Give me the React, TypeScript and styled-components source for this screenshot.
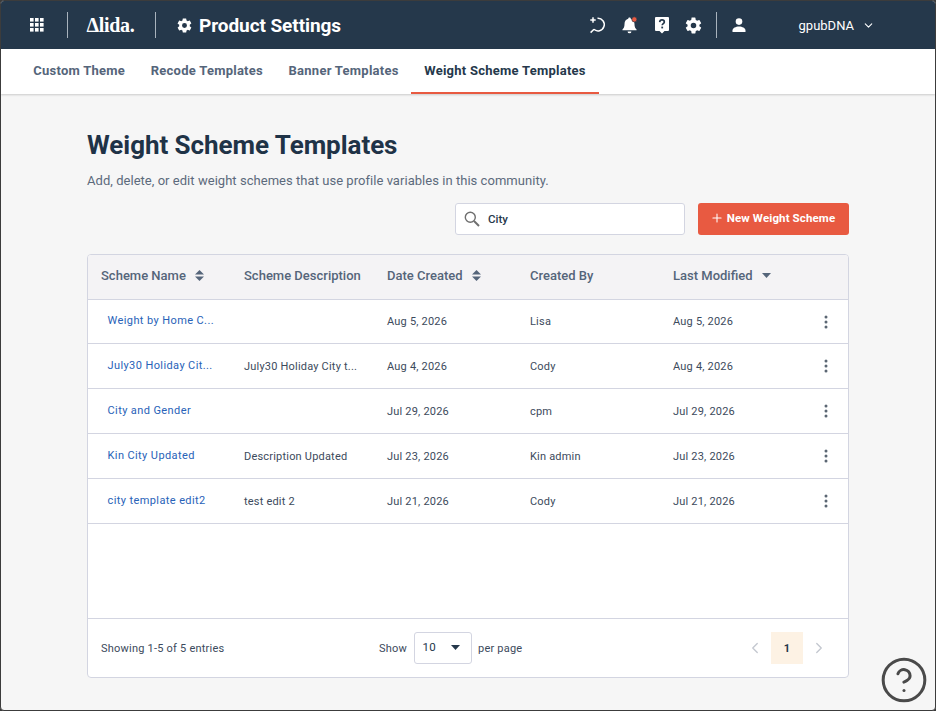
import styled, { createGlobalStyle } from "styled-components";
import { CircleHelp, ChevronDown, ChevronLeft, ChevronRight, Plus } from "lucide-react";

const GlobalStyle = createGlobalStyle`
  html, body {
    margin: 0;
    padding: 0;
    background: #3c3c3c;
  }
  * {
    box-sizing: border-box;
  }
  body {
    font-family: Roboto, "Liberation Sans", sans-serif;
  }
`;

const Frame = styled.div`
  position: relative;
  width: 936px;
  height: 711px;
  border: 1px solid #3c3c3c;
  border-radius: 4px;
  background: #f6f6f6;
  overflow: hidden;
`;

const Header = styled.header`
  height: 48px;
  background: #25384b;
  display: flex;
  align-items: center;
  color: #fff;
`;

const AppsButton = styled.div`
  width: 66px;
  display: flex;
  justify-content: center;
  padding-left: 5px;
`;

const Divider = styled.span`
  width: 1px;
  height: 26px;
  background: #a9b3bd;
`;

const LogoText = styled.div`
  width: 87px;
  display: flex;
  align-items: center;
  justify-content: center;
  font-family: "Liberation Serif", serif;
  font-size: 20px;
  font-weight: 700;
  letter-spacing: -0.3px;
  padding-right: 2px;
`;

const ProductTitle = styled.div`
  display: flex;
  align-items: center;
  gap: 6px;
  margin-left: 20px;
  font-size: 19px;
  font-weight: 700;
  letter-spacing: -0.07px;
`;

const HeaderRight = styled.div`
  margin-left: auto;
  display: flex;
  align-items: center;
`;

const HeaderIcon = styled.div`
  width: 32px;
  display: flex;
  justify-content: center;
`;

const UserIcon = styled(HeaderIcon)`
  margin-left: 6px;
`;

const HeaderDivider = styled(Divider)`
  margin-left: 6px;
`;

const UserName = styled.div`
  display: flex;
  align-items: center;
  gap: 8px;
  margin-left: 44px;
  margin-right: 60px;
  font-size: 13px;
`;

const Tabs = styled.nav`
  height: 45px;
  background: #fff;
  display: flex;
  padding-left: 19.5px;
  box-shadow: 0 1px 2px rgba(0, 0, 0, 0.18);
`;

const Tab = styled.div<{ $active?: boolean }>`
  padding: 0 12.8px;
  height: 45px;
  display: flex;
  align-items: center;
  font-size: 13px;
  font-weight: 700;
  letter-spacing: 0.25px;
  color: ${(p) => (p.$active ? "#25384b" : "#55657a")};
  border-bottom: 2px solid ${(p) => (p.$active ? "#e85a41" : "transparent")};
`;

const Content = styled.main`
  padding: 34px 86px 0;
`;

const Title = styled.h1`
  margin: 0;
  font-size: 26px;
  line-height: 34px;
  font-weight: 700;
  letter-spacing: -0.05px;
  color: #1f3347;
`;

const Subtitle = styled.p`
  margin: 11px 0 0;
  font-size: 13px;
  line-height: 16px;
  letter-spacing: 0.04px;
  color: #5c6a7c;
`;

const Toolbar = styled.div`
  display: flex;
  justify-content: flex-end;
  gap: 13px;
  margin-top: 14px;
`;

const SearchBox = styled.div`
  width: 230px;
  height: 32px;
  background: #fff;
  border: 1px solid #d3d5e1;
  border-radius: 3px;
  display: flex;
  align-items: center;
  gap: 8px;
  padding-left: 8px;
  font-size: 11.5px;
  font-weight: 500;
  color: #25384b;
`;

const NewButton = styled.button`
  width: 151px;
  height: 32px;
  background: #e85a41;
  border: 0;
  border-radius: 3px;
  color: #fff;
  display: flex;
  align-items: center;
  justify-content: center;
  gap: 3px;
  padding: 0 2px 2px 0;
  font-family: inherit;
  font-size: 11.5px;
  font-weight: 700;
  letter-spacing: 0.12px;
`;

const Card = styled.section`
  margin-top: 19px;
  height: 424px;
  background: #fff;
  border: 1px solid #d3d5e1;
  border-radius: 4px;
  display: flex;
  flex-direction: column;
  overflow: hidden;
`;

const HeadRow = styled.div`
  display: grid;
  grid-template-columns: repeat(5, 143px) 1fr;
  height: 45px;
  padding: 0 0 3px 13px;
  align-items: center;
  background: #f4f3f5;
  border-bottom: 1px solid #d3d5e1;
  flex-shrink: 0;
`;

const HeadCell = styled.div`
  display: flex;
  align-items: center;
  gap: 9px;
  font-size: 13px;
  font-weight: 500;
  color: #55657a;
`;

const Row = styled.div`
  display: grid;
  grid-template-columns: repeat(5, 143px) 1fr;
  height: 45px;
  padding-left: 13px;
  align-items: center;
  border-bottom: 1px solid #d3d5e1;
  flex-shrink: 0;

  &:nth-child(2) {
    height: 44px;
  }
`;

const NameLink = styled.a`
  padding-left: 6.5px;
  font-size: 11px;
  letter-spacing: 0.4px;
  color: #2862b8;
  position: relative;
  top: -1px;
`;

const Cell = styled.div`
  font-size: 11px;
  letter-spacing: 0.2px;
  color: #3c4a5c;
`;

const KebabCell = styled.div`
  display: flex;
  justify-content: flex-end;
  padding-right: 20px;
  color: #5b6673;
`;

const Footer = styled.div`
  margin-top: auto;
  height: 59px;
  border-top: 1px solid #d3d5e1;
  display: flex;
  align-items: center;
  padding: 0 13px;
  font-size: 11px;
  letter-spacing: 0.22px;
  color: #3c4a5c;
  flex-shrink: 0;
`;

const Entries = styled.div`
  width: 278px;
`;

const PerPage = styled.div`
  display: flex;
  align-items: center;
  gap: 6.5px;
`;

const PageSelect = styled.div`
  width: 58px;
  height: 32px;
  border: 1px solid #d3d5e1;
  border-radius: 3px;
  display: flex;
  align-items: center;
  justify-content: space-between;
  padding: 0 11px 2px 8px;
  font-size: 11.5px;
  color: #25384b;
`;

const Pager = styled.div`
  margin-left: auto;
  margin-right: 7px;
  display: flex;
  align-items: center;
  gap: 7px;
  color: #c4c8d0;
`;

const PageNumber = styled.div`
  width: 32px;
  height: 32px;
  background: #fdf2e4;
  color: #25384b;
  font-size: 11px;
  font-weight: 700;
  display: flex;
  align-items: center;
  justify-content: center;
`;

const HelpBubble = styled.div`
  position: absolute;
  right: 6px;
  bottom: 5px;
  width: 50px;
  height: 50px;
  color: #4a4a4a;
`;

const AppsIcon = () => (
  <svg width="14" height="14" viewBox="0 0 14 14" fill="#fff">
    {[0, 5, 10].flatMap((y) =>
      [0, 5, 10].map((x) => <rect key={`${x}-${y}`} x={x} y={y} width="3.6" height="3.6" />)
    )}
  </svg>
);

const SolidGear = ({ size }: { size: number }) => (
  <svg width={size} height={size} viewBox="0 0 24 24" fill="#fff">
    <path d="M19.4 13c.04-.33.06-.66.06-1s-.02-.67-.07-1l2.11-1.65c.19-.15.24-.42.12-.64l-2-3.46c-.12-.22-.39-.3-.61-.22l-2.49 1c-.52-.4-1.08-.73-1.69-.98l-.38-2.65A.49.49 0 0 0 14 2h-4c-.25 0-.46.18-.49.42l-.38 2.65c-.61.25-1.17.59-1.69.98l-2.49-1c-.23-.09-.49 0-.61.22l-2 3.46c-.13.22-.07.49.12.64L4.57 11c-.05.33-.08.67-.08 1s.02.67.07 1l-2.11 1.65c-.19.15-.24.42-.12.64l2 3.46c.12.22.39.3.61.22l2.49-1c.52.4 1.08.73 1.69.98l.38 2.65c.03.24.24.42.49.42h4c.25 0 .46-.18.49-.42l.38-2.65c.61-.25 1.17-.59 1.69-.98l2.49 1c.23.09.49 0 .61-.22l2-3.46c.12-.22.07-.49-.12-.64L19.4 13zM12 15.5a3.5 3.5 0 1 1 0-7 3.5 3.5 0 0 1 0 7z" />
  </svg>
);

const SparkSearchIcon = () => (
  <svg width="18" height="18" viewBox="0 0 18 18" fill="none" stroke="#fff" strokeWidth="1.5">
    <path d="M8.500 2.300a6.300 6.300 0 1 1-3.700 11" />
    <path d="M5 13.300 1.600 16.600" />
    <path d="M4 1 4.800 3.200 7 4 4.800 4.800 4 7 3.200 4.800 1 4 3.200 3.200z" fill="#fff" strokeWidth="0.5" />
  </svg>
);

const BellIcon = () => (
  <svg width="19" height="19" viewBox="0 0 18 18" fill="#fff">
    <path d="M9 1.500c.7 0 1.200.5 1.200 1.100 2.200.5 3.500 2.400 3.500 4.800 0 3 .8 4.400 2 5.400v.8H2.300v-.8c1.200-1 2-2.400 2-5.400 0-2.400 1.300-4.300 3.500-4.800C7.800 2 8.300 1.500 9 1.500z" />
    <path d="M7.200 14.600h3.600a1.800 1.800 0 0 1-3.600 0z" />
    <circle cx="13.600" cy="3.200" r="2.400" fill="#e85a41" stroke="#25384b" strokeWidth="0.6" />
  </svg>
);

const HelpFlagIcon = () => (
  <svg width="16" height="18" viewBox="0 0 16 18">
    <path d="M2 1h12a1 1 0 0 1 1 1v12a1 1 0 0 1-1 1h-3.500L8 17.500 5.500 15H2a1 1 0 0 1-1-1V2a1 1 0 0 1 1-1z" fill="#fff" />
    <path d="M5.700 6.100C5.800 4.700 6.700 3.900 8 3.900c1.400 0 2.300.8 2.300 2 0 1.700-2.100 1.700-2.100 3.400" fill="none" stroke="#25384b" strokeWidth="1.700" />
    <rect x="7.300" y="10.600" width="1.800" height="1.800" fill="#25384b" />
  </svg>
);

const PersonIcon = () => (
  <svg width="16" height="14" viewBox="0 0 16 14" fill="#fff">
    <circle cx="8" cy="3.600" r="3.300" />
    <path d="M1.500 14v-1.600C1.500 10 4.700 8.400 8 8.400s6.500 1.600 6.500 4V14z" />
  </svg>
);

const SearchIcon = () => (
  <svg width="16" height="16" viewBox="0 0 16 16" fill="none" stroke="#6f6f6f">
    <circle cx="6.300" cy="6.300" r="5" strokeWidth="1.400" />
    <path d="M10 10l5 5" strokeWidth="1.900" />
  </svg>
);

const SortBoth = () => (
  <svg width="9" height="11" viewBox="0 0 9 11" fill="#55657a">
    <path d="M4.500 0 9 4.500H0z" />
    <path d="M4.500 11 0 6.500h9z" />
  </svg>
);

const Caret = ({ color = "#55657a" }: { color?: string }) => (
  <svg width="9" height="5" viewBox="0 0 9 5" fill={color}>
    <path d="M0 0h9L4.500 5z" />
  </svg>
);

const Kebab = () => (
  <svg width="4" height="14" viewBox="0 0 4 14" fill="currentColor">
    <circle cx="2" cy="2" r="1.500" />
    <circle cx="2" cy="7" r="1.500" />
    <circle cx="2" cy="12" r="1.500" />
  </svg>
);

const rows = [
  { name: "Weight by Home C...", desc: "", date: "Aug 5, 2026", by: "Lisa" },
  { name: "July30 Holiday Cit...", desc: "July30 Holiday City t...", date: "Aug 4, 2026", by: "Cody" },
  { name: "City and Gender", desc: "", date: "Jul 29, 2026", by: "cpm" },
  { name: "Kin City Updated", desc: "Description Updated", date: "Jul 23, 2026", by: "Kin admin" },
  { name: "city template edit2", desc: "test edit 2", date: "Jul 21, 2026", by: "Cody" },
];

export default function App() {
  return (
    <>
      <GlobalStyle />
      <Frame>
        <Header>
          <AppsButton>
            <AppsIcon />
          </AppsButton>
          <Divider />
          <LogoText>Δlida.</LogoText>
          <Divider />
          <ProductTitle>
            <SolidGear size={17} />
            Product Settings
          </ProductTitle>
          <HeaderRight>
            <HeaderIcon>
              <SparkSearchIcon />
            </HeaderIcon>
            <HeaderIcon>
              <BellIcon />
            </HeaderIcon>
            <HeaderIcon>
              <HelpFlagIcon />
            </HeaderIcon>
            <HeaderIcon>
              <SolidGear size={19} />
            </HeaderIcon>
            <HeaderDivider />
            <UserIcon>
              <PersonIcon />
            </UserIcon>
            <UserName>
              gpubDNA
              <ChevronDown size={13} strokeWidth={2} />
            </UserName>
          </HeaderRight>
        </Header>
        <Tabs>
          <Tab>Custom Theme</Tab>
          <Tab>Recode Templates</Tab>
          <Tab>Banner Templates</Tab>
          <Tab $active>Weight Scheme Templates</Tab>
        </Tabs>
        <Content>
          <Title>Weight Scheme Templates</Title>
          <Subtitle>Add, delete, or edit weight schemes that use profile variables in this community.</Subtitle>
          <Toolbar>
            <SearchBox>
              <SearchIcon />
              City
            </SearchBox>
            <NewButton>
              <Plus size={14} strokeWidth={1.8} />
              New Weight Scheme
            </NewButton>
          </Toolbar>
          <Card>
            <HeadRow>
              <HeadCell>
                Scheme Name <SortBoth />
              </HeadCell>
              <HeadCell>Scheme Description</HeadCell>
              <HeadCell>
                Date Created <SortBoth />
              </HeadCell>
              <HeadCell>Created By</HeadCell>
              <HeadCell>
                Last Modified <Caret />
              </HeadCell>
            </HeadRow>
            {rows.map((r) => (
              <Row key={r.name}>
                <NameLink>{r.name}</NameLink>
                <Cell>{r.desc}</Cell>
                <Cell>{r.date}</Cell>
                <Cell>{r.by}</Cell>
                <Cell>{r.date}</Cell>
                <KebabCell>
                  <Kebab />
                </KebabCell>
              </Row>
            ))}
            <Footer>
              <Entries>Showing 1-5 of 5 entries</Entries>
              <PerPage>
                Show
                <PageSelect>
                  10
                  <Caret color="#25384b" />
                </PageSelect>
                per page
              </PerPage>
              <Pager>
                <ChevronLeft size={18} strokeWidth={1.8} />
                <PageNumber>1</PageNumber>
                <ChevronRight size={18} strokeWidth={1.8} />
              </Pager>
            </Footer>
          </Card>
        </Content>
        <HelpBubble>
          <CircleHelp size={50} strokeWidth={1.45} />
        </HelpBubble>
      </Frame>
    </>
  );
}
